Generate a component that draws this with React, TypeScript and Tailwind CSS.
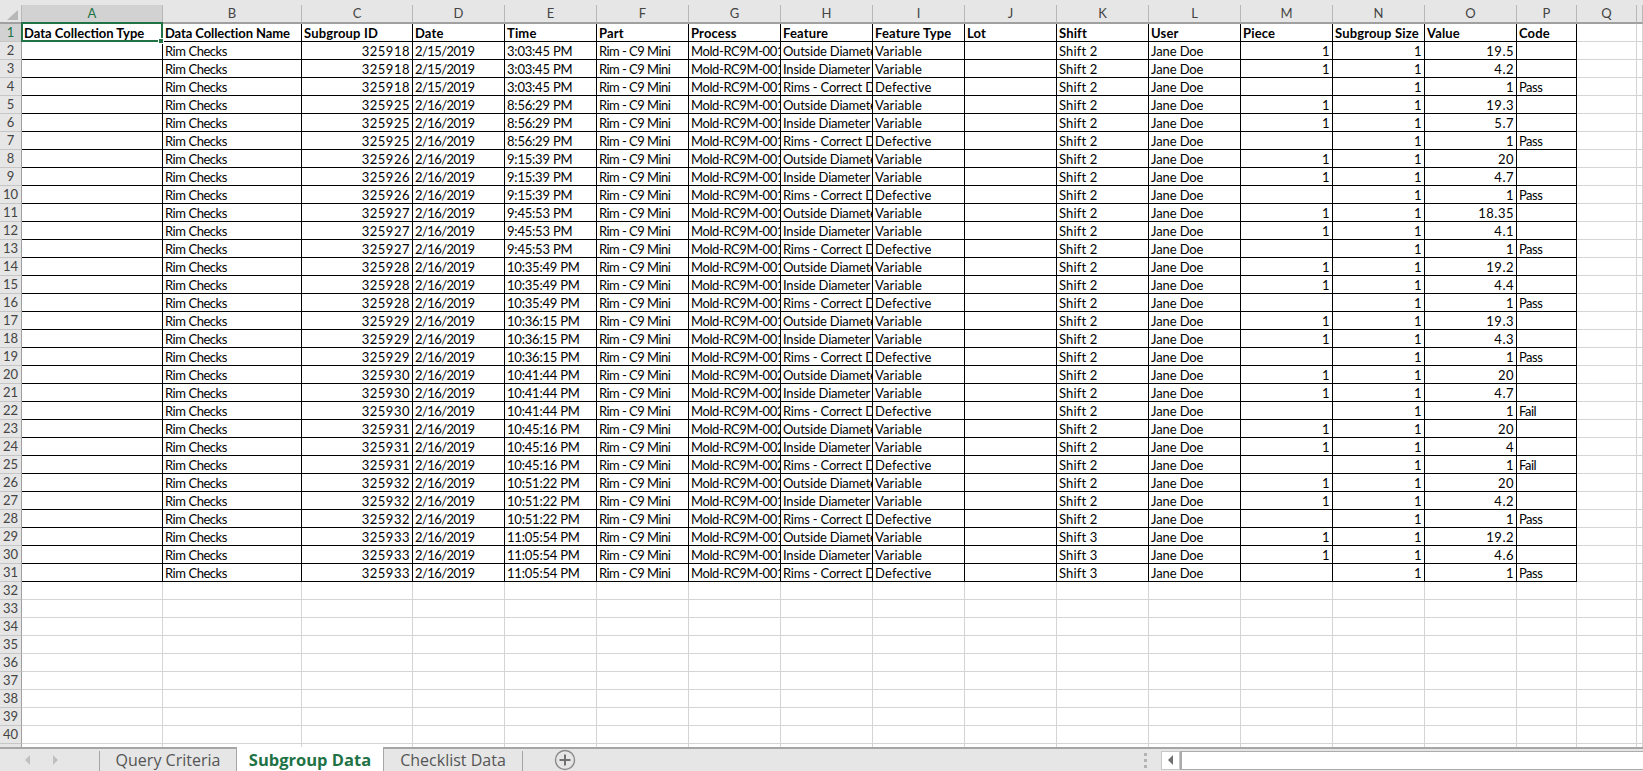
const colLetters = ["A", "B", "C", "D", "E", "F", "G", "H", "I", "J", "K", "L", "M", "N", "O", "P", "Q", ""];

const headers = [
  "Data Collection Type",
  "Data Collection Name",
  "Subgroup ID",
  "Date",
  "Time",
  "Part",
  "Process",
  "Feature",
  "Feature Type",
  "Lot",
  "Shift",
  "User",
  "Piece",
  "Subgroup Size",
  "Value",
  "Code",
];

// Lato's capitals and digits differ in width from the sheet's font, so spacing is set per column
const colTracking = [
  "tracking-normal",
  "tracking-[-0.45px]",
  "tracking-[0.5px]",
  "tracking-[-0.55px]",
  "tracking-[-0.2px]",
  "tracking-[-0.55px]",
  "tracking-[-0.4px]",
  "tracking-[-0.2px]",
  "tracking-[0.15px]",
  "tracking-normal",
  "tracking-[0.15px]",
  "tracking-[-0.1px]",
  "tracking-[0.5px]",
  "tracking-[0.5px]",
  "tracking-[0.5px]",
  "tracking-[-0.5px]",
  "tracking-normal",
  "tracking-normal",
];

// one entry per subgroup, each subgroup makes three rows
const subgroups = [
  { id: 325918, date: "2/15/2019", time: "3:03:45 PM", mold: "001", shift: "Shift 2", od: 19.5, id2: 4.2, code: "Pass" },
  { id: 325925, date: "2/16/2019", time: "8:56:29 PM", mold: "001", shift: "Shift 2", od: 19.3, id2: 5.7, code: "Pass" },
  { id: 325926, date: "2/16/2019", time: "9:15:39 PM", mold: "001", shift: "Shift 2", od: 20, id2: 4.7, code: "Pass" },
  { id: 325927, date: "2/16/2019", time: "9:45:53 PM", mold: "001", shift: "Shift 2", od: 18.35, id2: 4.1, code: "Pass" },
  { id: 325928, date: "2/16/2019", time: "10:35:49 PM", mold: "001", shift: "Shift 2", od: 19.2, id2: 4.4, code: "Pass" },
  { id: 325929, date: "2/16/2019", time: "10:36:15 PM", mold: "001", shift: "Shift 2", od: 19.3, id2: 4.3, code: "Pass" },
  { id: 325930, date: "2/16/2019", time: "10:41:44 PM", mold: "002", shift: "Shift 2", od: 20, id2: 4.7, code: "Fail" },
  { id: 325931, date: "2/16/2019", time: "10:45:16 PM", mold: "002", shift: "Shift 2", od: 20, id2: 4, code: "Fail" },
  { id: 325932, date: "2/16/2019", time: "10:51:22 PM", mold: "001", shift: "Shift 2", od: 20, id2: 4.2, code: "Pass" },
  { id: 325933, date: "2/16/2019", time: "11:05:54 PM", mold: "001", shift: "Shift 3", od: 19.2, id2: 4.6, code: "Pass" },
];

type CellValue = string | number | null;

const rows: CellValue[][] = subgroups.flatMap((s) => {
  const base = ["Rim Checks", s.id, s.date, s.time, "Rim - C9 Mini", `Mold-RC9M-${s.mold}`];
  const tail = [null, s.shift, "Jane Doe"];
  return [
    [null, ...base, "Outside Diameter", "Variable", ...tail, 1, 1, s.od, null],
    [null, ...base, "Inside Diameter", "Variable", ...tail, 1, 1, s.id2, null],
    [null, ...base, "Rims - Correct Diameter", "Defective", ...tail, null, 1, 1, s.code],
  ];
});

const TOTAL_ROWS = 41;

const DataCell = ({ value, inTable, col }: { value: CellValue; inTable: boolean; col: number }) => {
  const rightAlign = typeof value === "number";
  return (
    <div
      className={`overflow-hidden whitespace-nowrap px-[2px] text-[13px] leading-[18px] text-black border-r border-b ${colTracking[col]} ${
        inTable ? "border-black" : "border-[#d4d4d4]"
      } ${rightAlign ? "text-right" : "text-left"}`}
    >
      {value}
    </div>
  );
};

const SheetTab = ({ label, active }: { label: string; active?: boolean }) =>
  active ? (
    <div className="-mt-[2px] flex h-[24px] w-[148px] items-center justify-center border-x border-[#a6a6a6] bg-white pt-[2px] font-['Open_Sans',sans-serif] text-[16.5px] font-bold text-[#217346]">
      {label}
    </div>
  ) : (
    <div className="flex h-full items-center justify-center font-['Open_Sans',sans-serif] text-[16px] text-[#555555]">
      {label}
    </div>
  );

export default function App() {
  return (
    <div className="flex h-screen w-full flex-col overflow-hidden bg-white font-['Lato',sans-serif]">
      <div className="h-[5px] shrink-0 bg-[#e6e6e6]" />

      <div className="min-h-0 flex-1 overflow-hidden">
        <div className="grid grid-cols-[22px_141px_139px_111px_repeat(12,92px)_60px_60px_6px] grid-rows-[19px] auto-rows-[18px]">
          {/* corner */}
          <div className="border-r border-b-2 border-r-[#b8b8b8] border-b-[#a0a0a0] bg-[#e6e6e6]">
            <svg width="21" height="17" viewBox="0 0 21 17">
              <polygon points="18,5 18,15 7,15" fill="#b7b7b7" />
            </svg>
          </div>

          {/* column letters */}
          {colLetters.map((letter, i) => (
            <div
              key={`col-${i}`}
              className={`flex items-center justify-center border-r border-b-2 border-r-[#b8b8b8] pt-px text-[13px] ${
                i === 0
                  ? "border-b-[#217346] bg-[#d2d2d2] text-[#217346]"
                  : "border-b-[#a0a0a0] bg-[#e6e6e6] text-[#444444]"
              }`}
            >
              {letter}
            </div>
          ))}

          {Array.from({ length: TOTAL_ROWS }, (_, r) => {
            const rowNo = r + 1;
            const isHeader = r === 0;
            const record = r >= 1 && r <= rows.length ? rows[r - 1] : null;
            const inTable = isHeader || record !== null;

            return [
              <div
                key={`rh-${r}`}
                className={`flex items-center justify-center border-r border-b border-r-[#9f9f9f] border-b-[#c6c6c6] pt-px text-[13px] ${
                  isHeader ? "bg-[#d2d2d2] text-[#217346]" : "bg-[#e6e6e6] text-[#444444]"
                }`}
              >
                {rowNo <= 40 ? rowNo : ""}
              </div>,
              ...colLetters.map((_, c) => {
                const cellKey = `c-${r}-${c}`;
                const tableCol = c < 16;

                if (isHeader && c === 0) {
                  return (
                    <div
                      key={cellKey}
                      className="relative z-10 whitespace-nowrap border-r border-b border-black px-[2px] text-[13px] font-bold leading-[18px] text-black"
                    >
                      {headers[0]}
                      {/* active cell frame */}
                      <div className="absolute -top-0.5 -right-px -bottom-px -left-px border-2 border-[#217346]" />
                      <div className="absolute -right-[2px] -bottom-[3px] size-[6px] border border-white bg-[#217346]" />
                    </div>
                  );
                }

                if (isHeader && tableCol) {
                  return (
                    <div
                      key={cellKey}
                      className={`overflow-hidden whitespace-nowrap border-r border-b border-black px-[2px] text-[13px] font-bold leading-[18px] text-black ${
                        c === 1 ? "tracking-[-0.1px]" : "tracking-[0.15px]"
                      }`}
                    >
                      {headers[c]}
                    </div>
                  );
                }

                return (
                  <DataCell
                    key={cellKey}
                    value={record && tableCol ? record[c] : null}
                    inTable={inTable && tableCol}
                    col={c}
                  />
                );
              }),
            ];
          })}
        </div>
      </div>

      {/* sheet tabs and horizontal scroll bar */}
      <div className="flex h-[24px] shrink-0 items-stretch border-t-2 border-[#a6a6a6] bg-[#e6e6e6]">
        <div className="flex w-[99px] items-center gap-[23px] pl-[25px]">
          <svg width="5" height="10" viewBox="0 0 5 10">
            <polygon points="5,0 5,10 0,5" fill="#c0c0c0" />
          </svg>
          <svg width="5" height="10" viewBox="0 0 5 10">
            <polygon points="0,0 0,10 5,5" fill="#c0c0c0" />
          </svg>
        </div>
        <div className="mt-[2px] w-px bg-[#a6a6a6]" />
        <div className="flex w-[136px] justify-center">
          <SheetTab label="Query Criteria" />
        </div>
        <SheetTab label="Subgroup Data" active />
        <div className="flex w-[138px] justify-center">
          <SheetTab label="Checklist Data" />
        </div>
        <div className="mt-[2px] w-px bg-[#a6a6a6]" />
        <div className="ml-[31px] flex items-center">
          <svg width="22" height="22" viewBox="0 0 22 22">
            <circle cx="11" cy="11" r="9.5" fill="none" stroke="#8a8a8a" strokeWidth="1.4" />
            <path d="M11 5.5v11M5.5 11h11" stroke="#707070" strokeWidth="2" />
          </svg>
        </div>

        <div className="ml-auto flex w-[499px] items-center">
          <div className="flex w-[17px] flex-col items-start gap-[3px] pt-[1px]">
            <div className="size-[3px] bg-[#b3b3b3]" />
            <div className="size-[3px] bg-[#b3b3b3]" />
            <div className="size-[3px] bg-[#b3b3b3]" />
          </div>
          <div className="flex h-[19px] w-[19px] items-center justify-center border border-[#c8c8c8] bg-white">
            <svg width="5" height="10" viewBox="0 0 5 10">
              <polygon points="5,0 5,10 0,5" fill="#6f6f6f" />
            </svg>
          </div>
          <div className="h-[19px] flex-1 border-y border-l-2 border-[#ababab] bg-white" />
        </div>
      </div>
    </div>
  );
}
